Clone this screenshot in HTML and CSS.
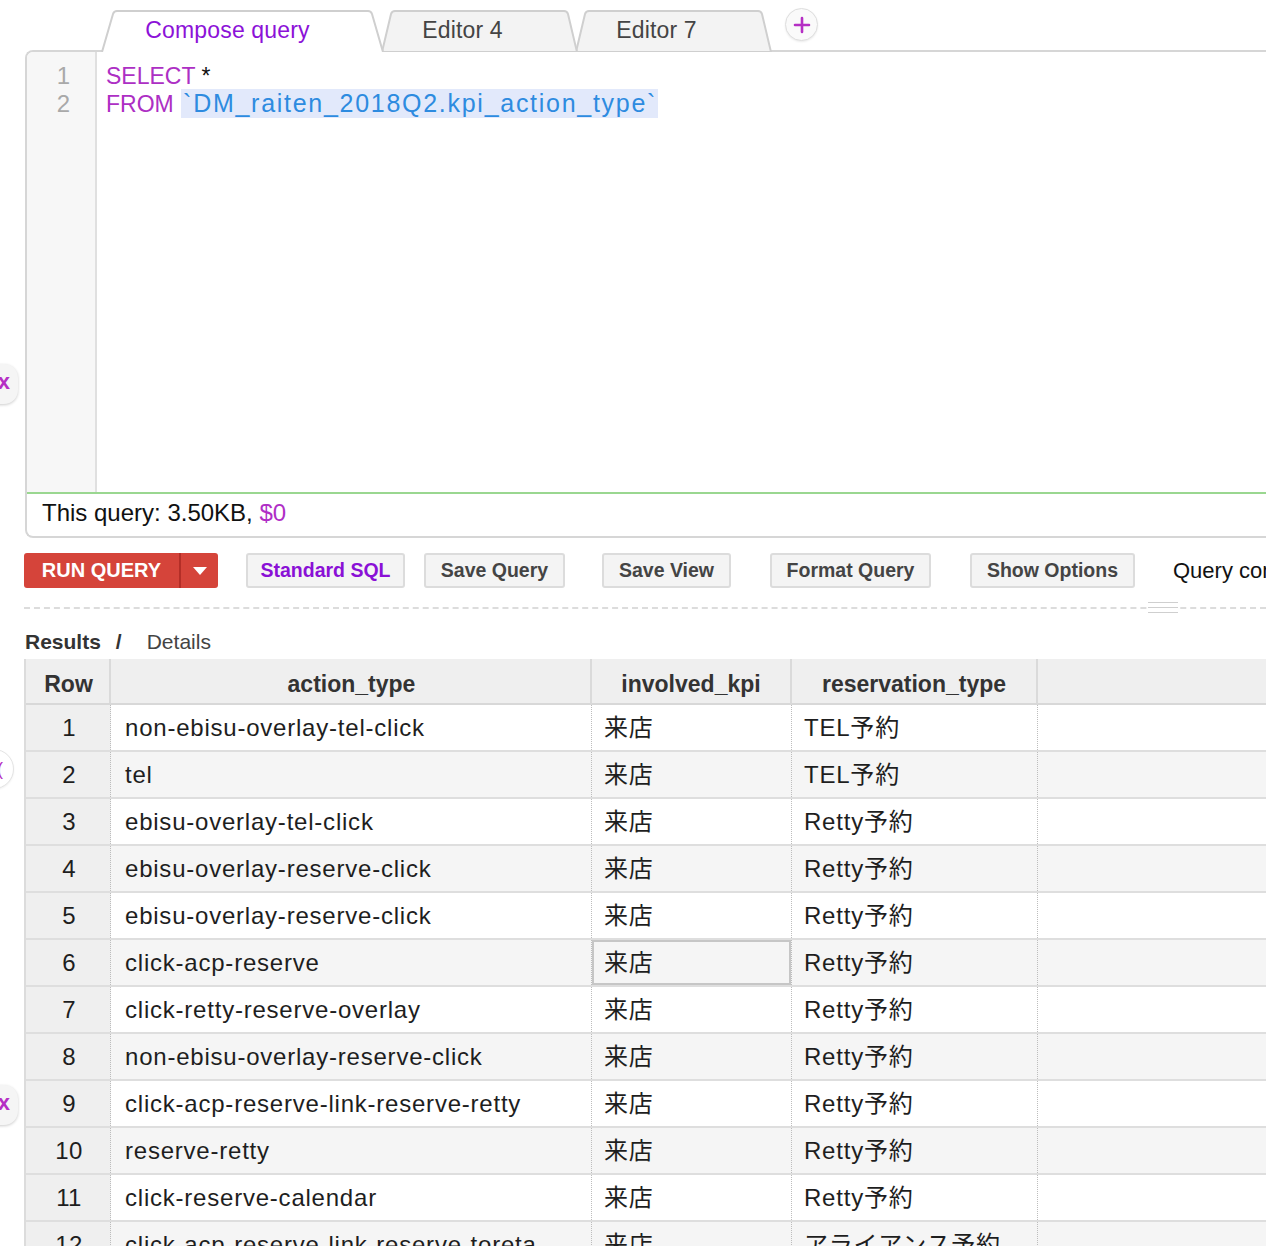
FILE: index.html
```html
<!DOCTYPE html>
<html>
<head>
<meta charset="utf-8">
<link rel="stylesheet" href="styles.css">
</head>
<body>
<div class="page">
  <div class="tabbar">
    <div class="tab tab-active">
      <svg class="tab-bg" width="283" height="42" viewBox="0 0 283 42"><path d="M1 42 L12 4 Q13 1 16 1 L267 1 Q270 1 271 4 L282 42" fill="#fff" stroke="#cfcfcf" stroke-width="2"/></svg>
      <span class="tab-label">Compose query</span>
    </div>
    <div class="tab tab-idle">
      <svg class="tab-bg" width="197" height="42" viewBox="0 0 197 42"><path d="M1 42 L10 4 Q11 1 14 1 L183 1 Q186 1 187 4 L196 42 Z" fill="#f3f3f3" stroke="#cfcfcf" stroke-width="2"/></svg>
      <span class="tab-label">Editor 4</span>
    </div>
    <div class="tab tab-idle">
      <svg class="tab-bg" width="197" height="42" viewBox="0 0 197 42"><path d="M1 42 L10 4 Q11 1 14 1 L183 1 Q186 1 187 4 L196 42 Z" fill="#f3f3f3" stroke="#cfcfcf" stroke-width="2"/></svg>
      <span class="tab-label">Editor 7</span>
    </div>
    <div class="add-tab">
      <svg width="18" height="18" viewBox="0 0 18 18"><path d="M9 2 V16 M2 9 H16" stroke="#b52fc4" stroke-width="2.6" stroke-linecap="round"/></svg>
    </div>
  </div>

  <div class="editor">
    <div class="code-area">
      <div class="gutter">
        <div class="ln">1</div>
        <div class="ln">2</div>
      </div>
      <div class="code">
        <div class="code-line"><span class="kw">SELECT</span> *</div>
        <div class="code-line"><span class="kw">FROM</span> <span class="ident">`DM_raiten_2018Q2.kpi_action_type`</span></div>
      </div>
    </div>
    <div class="status">This query: 3.50KB, <span class="cost">$0</span></div>
  </div>

  <div class="actions">
    <div class="run-btn"><span class="run-label">RUN QUERY</span><span class="run-drop"><svg width="14" height="8" viewBox="0 0 14 8"><path d="M0 0 H14 L7 8 Z" fill="#fff"/></svg></span></div>
    <div class="btn btn-sql">Standard SQL</div>
    <div class="btn btn-saveq">Save Query</div>
    <div class="btn btn-savev">Save View</div>
    <div class="btn btn-format">Format Query</div>
    <div class="btn btn-show">Show Options</div>
    <div class="query-state">Query complete</div>
  </div>

  <div class="separator"><div class="grip"></div></div>

  <div class="results-nav"><span class="res-active">Results</span><span class="res-slash">/</span><span class="res-details">Details</span></div>

  <div class="grid">
    <div class="row head">
      <div class="c c-num">Row</div>
      <div class="c c-act">action_type</div>
      <div class="c c-kpi">involved_kpi</div>
      <div class="c c-res">reservation_type</div>
      <div class="c c-rest"></div>
    </div>
    <div class="row odd"><div class="c c-num">1</div><div class="c c-act">non-ebisu-overlay-tel-click</div><div class="c c-kpi">来店</div><div class="c c-res">TEL予約</div><div class="c c-rest"></div></div>
    <div class="row even"><div class="c c-num">2</div><div class="c c-act">tel</div><div class="c c-kpi">来店</div><div class="c c-res">TEL予約</div><div class="c c-rest"></div></div>
    <div class="row odd"><div class="c c-num">3</div><div class="c c-act">ebisu-overlay-tel-click</div><div class="c c-kpi">来店</div><div class="c c-res">Retty予約</div><div class="c c-rest"></div></div>
    <div class="row even"><div class="c c-num">4</div><div class="c c-act">ebisu-overlay-reserve-click</div><div class="c c-kpi">来店</div><div class="c c-res">Retty予約</div><div class="c c-rest"></div></div>
    <div class="row odd"><div class="c c-num">5</div><div class="c c-act">ebisu-overlay-reserve-click</div><div class="c c-kpi">来店</div><div class="c c-res">Retty予約</div><div class="c c-rest"></div></div>
    <div class="row even"><div class="c c-num">6</div><div class="c c-act">click-acp-reserve</div><div class="c c-kpi selected">来店</div><div class="c c-res">Retty予約</div><div class="c c-rest"></div></div>
    <div class="row odd"><div class="c c-num">7</div><div class="c c-act">click-retty-reserve-overlay</div><div class="c c-kpi">来店</div><div class="c c-res">Retty予約</div><div class="c c-rest"></div></div>
    <div class="row even"><div class="c c-num">8</div><div class="c c-act">non-ebisu-overlay-reserve-click</div><div class="c c-kpi">来店</div><div class="c c-res">Retty予約</div><div class="c c-rest"></div></div>
    <div class="row odd"><div class="c c-num">9</div><div class="c c-act">click-acp-reserve-link-reserve-retty</div><div class="c c-kpi">来店</div><div class="c c-res">Retty予約</div><div class="c c-rest"></div></div>
    <div class="row even"><div class="c c-num">10</div><div class="c c-act">reserve-retty</div><div class="c c-kpi">来店</div><div class="c c-res">Retty予約</div><div class="c c-rest"></div></div>
    <div class="row odd"><div class="c c-num">11</div><div class="c c-act">click-reserve-calendar</div><div class="c c-kpi">来店</div><div class="c c-res">Retty予約</div><div class="c c-rest"></div></div>
    <div class="row even"><div class="c c-num">12</div><div class="c c-act">click-acp-reserve-link-reserve-toreta</div><div class="c c-kpi">来店</div><div class="c c-res">アライアンス予約</div><div class="c c-rest"></div></div>
  </div>

  <div class="side-pill pill-a"><span>x</span></div>
  <div class="side-round"><span>(</span></div>
  <div class="side-pill pill-b"><span>x</span></div>
</div>
</body>
</html>
```

FILE: styles.css
```css
html, body {
  margin: 0;
  padding: 0;
  background: #ffffff;
}
body {
  font-family: "Liberation Sans", Arial, "Noto Sans CJK JP", sans-serif;
  color: #222;
  overflow: hidden;
  width: 1266px;
  height: 1246px;
}
.page {
  position: relative;
  width: 1266px;
  height: 1246px;
  overflow: hidden;
}

/* Tabs */
.tabbar {
  height: 52px;
  display: flex;
  align-items: flex-end;
  padding-left: 101px;
  position: relative;
  z-index: 2;
}
.tab {
  position: relative;
  flex-shrink: 0;
  height: 42px;
  display: flex;
  align-items: center;
  justify-content: center;
  font-size: 23px;
  letter-spacing: 0.15px;
  box-sizing: border-box;
  padding-right: 30px;
}
.tab-bg {
  position: absolute;
  left: 0;
  top: 0;
}
.tab-label {
  position: relative;
  padding-bottom: 2px;
}
.tab-active {
  width: 283px;
  color: #8c12d8;
  z-index: 3;
}
.tab-idle {
  width: 197px;
  margin-left: -3px;
  color: #444;
  z-index: 1;
  padding-right: 34px;
}
.tab-idle:nth-child(2) { z-index: 2; }
.add-tab {
  flex-shrink: 0;
  width: 31px;
  height: 31px;
  border-radius: 50%;
  border: 1px solid #dedede;
  background: #fafafa;
  box-shadow: 0 1px 2px rgba(0,0,0,0.08);
  display: flex;
  align-items: center;
  justify-content: center;
  margin-left: 13px;
  align-self: flex-start;
  margin-top: 8px;
}

/* Editor */
.editor {
  margin-left: 25px;
  margin-top: -2px;
  border: 2px solid #d6d6d6;
  border-right: none;
  border-radius: 8px 0 0 8px;
  background: #fff;
  position: relative;
  z-index: 1;
}
.code-area {
  display: flex;
  height: 440px;
}
.gutter {
  background: #f7f7f7;
  border-right: 2px solid #e0e0e0;
  border-top-left-radius: 6px;
  padding-top: 10px;
  box-sizing: border-box;
  width: 70px;
  flex-shrink: 0;
}
.ln {
  font-size: 24px;
  line-height: 28px;
  color: #a9a9a9;
  text-align: right;
  padding-right: 25px;
}
.code {
  padding-top: 10px;
  padding-left: 9px;
  font-size: 23px;
  line-height: 28px;
  color: #111;
}
.code-line {
  height: 28px;
  white-space: nowrap;
}
.kw {
  color: #ad2fc4;
}
.ident {
  display: inline-block;
  color: #2d8be0;
  background: #e2e9fb;
  font-size: 25px;
  letter-spacing: 1.72px;
  line-height: 29px;
  padding-left: 2px;
  padding-right: 1px;
  margin-left: 1px;
  vertical-align: top;
  margin-top: -1px;
}
.status {
  border-top: 2px solid #9ad790;
  height: 42px;
  line-height: 37px;
  padding-left: 15px;
  font-size: 24px;
  color: #111;
}
.cost {
  color: #b02ec6;
}

/* Action buttons */
.actions {
  display: flex;
  align-items: center;
  margin-top: 15px;
  margin-left: 24px;
  height: 35px;
  white-space: nowrap;
  overflow: hidden;
}
.actions > div { flex-shrink: 0; }
.run-btn {
  display: flex;
  height: 35px;
  width: 194px;
  background: #d5443a;
  border-radius: 3px;
  color: #fff;
  font-weight: bold;
  font-size: 20px;
}
.run-label {
  width: 157px;
  display: flex;
  align-items: center;
  justify-content: center;
  border-right: 2px solid #b32e27;
  box-sizing: border-box;
}
.run-drop {
  flex: 1;
  display: flex;
  align-items: center;
  justify-content: center;
}
.btn {
  height: 35px;
  box-sizing: border-box;
  border: 2px solid #dcdcdc;
  border-radius: 3px;
  background: #f4f4f4;
  color: #444;
  font-weight: bold;
  font-size: 19.5px;
  display: flex;
  align-items: center;
  justify-content: center;
}
.btn-sql { width: 159px; margin-left: 28px; color: #8a10d6; }
.btn-saveq { width: 141px; margin-left: 19px; }
.btn-savev { width: 129px; margin-left: 37px; }
.btn-format { width: 161px; margin-left: 39px; }
.btn-show { width: 165px; margin-left: 39px; }
.query-state {
  margin-left: 38px;
  font-size: 22px;
  color: #111;
}

.separator {
  position: relative;
  margin-top: 19px;
  margin-left: 24px;
  border-top: 2px dashed #dcdcdc;
  height: 0;
}
.grip {
  position: absolute;
  left: 1124px;
  top: -7px;
  width: 30px;
  height: 11px;
  background: #fff;
  border-top: 1px solid #cfcfcf;
  border-bottom: 1px solid #cfcfcf;
  box-sizing: border-box;
}
.grip::after {
  content: "";
  position: absolute;
  left: 0;
  right: 0;
  top: 4px;
  border-top: 1px solid #cfcfcf;
}

.results-nav {
  margin-top: 21px;
  margin-left: 25px;
  height: 24px;
  line-height: 24px;
  font-size: 21px;
  color: #333;
  margin-bottom: 5px;
}
.res-active { font-weight: bold; }
.res-slash { font-weight: bold; margin-left: 15px; margin-right: 25px; }
.res-details { color: #444; }

/* Grid */
.grid {
  margin-left: 24px;
  border-left: 2px solid #dcdcdc;
}
.row {
  display: flex;
  height: 47px;
  border-bottom: 2px solid #dedede;
  box-sizing: border-box;
}
.row.head {
  height: 46px;
  background: #efefef;
  border-bottom: 2px solid #d8d8d8;
}
.row.odd { background: #fff; }
.row.even { background: #f5f5f5; }
.c {
  box-sizing: border-box;
  flex-shrink: 0;
  border-right: 1px dotted #bdbdbd;
  font-size: 24px;
  letter-spacing: 0.78px;
  line-height: 45px;
  white-space: nowrap;
  overflow: hidden;
  padding: 0 12px;
  color: #1e1e1e;
}
.head .c {
  border-right: 2px solid #dadada;
  font-weight: bold;
  font-size: 23px;
  letter-spacing: 0;
  line-height: 44px;
  padding-top: 3px;
  text-align: center;
  color: #333;
}
.c-num {
  width: 85px;
  text-align: center;
  background: #efefef;
  padding: 0 0 0 2px;
  letter-spacing: 0.3px;
}
.c-act { width: 481px; padding-left: 14px; }
.c-kpi { width: 200px; }
.c-res { width: 246px; }
.c-rest { flex: 1; border-right: none; }
.head .c-rest { border-right: none; }
.c.selected {
  box-shadow: inset 0 0 0 2px #c6c6c6;
}

/* Left overlay widgets */
.side-pill {
  position: absolute;
  left: -24px;
  width: 42px;
  height: 40px;
  background: #f5f5f5;
  border-radius: 0 14px 14px 0;
  box-shadow: 0 1px 3px rgba(0,0,0,0.2);
  display: flex;
  align-items: center;
  justify-content: flex-end;
  padding-right: 8px;
  box-sizing: border-box;
  color: #b52fc4;
  font-weight: bold;
  font-size: 22px;
}
.side-pill span { margin-top: -4px; }
.pill-a { top: 364px; }
.pill-b { top: 1085px; }
.side-round {
  position: absolute;
  left: -26px;
  top: 749px;
  width: 40px;
  height: 40px;
  border-radius: 50%;
  background: #fff;
  border: 1px solid #e4e4e4;
  box-shadow: 0 1px 2px rgba(0,0,0,0.06);
  display: flex;
  align-items: center;
  justify-content: flex-end;
  padding-right: 10px;
  box-sizing: border-box;
  color: #b52fc4;
  font-size: 18px;
}
```
